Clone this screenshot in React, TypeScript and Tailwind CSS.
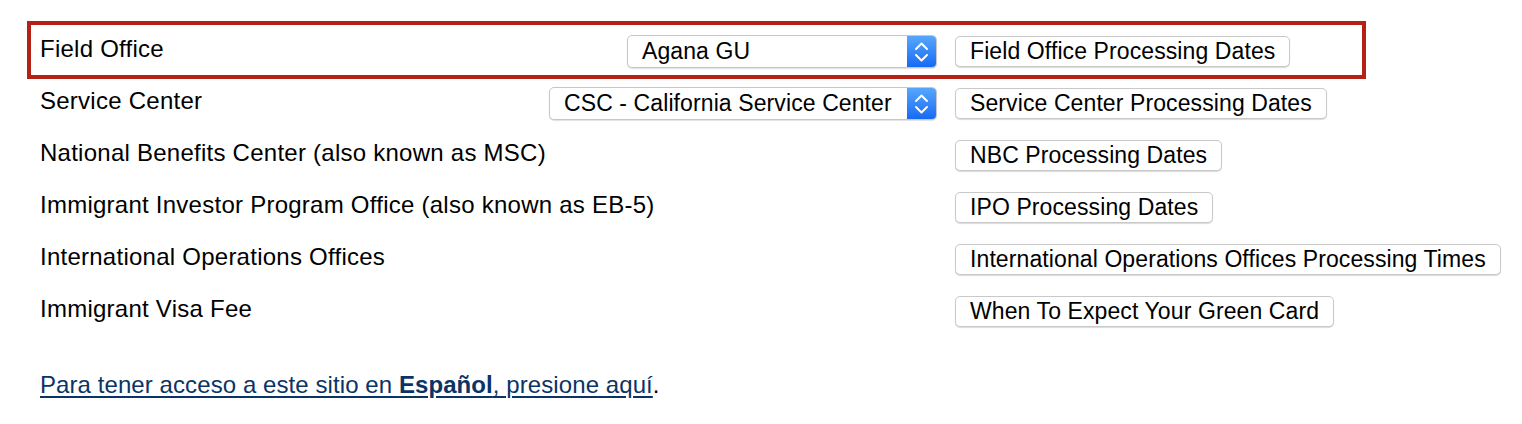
import React from "react";

type Row = {
  label: string;
  button: string;
  select?: { value: string; width: string };
};

const rows: Row[] = [
  {
    label: "Field Office",
    button: "Field Office Processing Dates",
    select: { value: "Agana GU", width: "w-[310px]" },
  },
  {
    label: "Service Center",
    button: "Service Center Processing Dates",
    select: { value: "CSC - California Service Center", width: "w-[388px]" },
  },
  { label: "National Benefits Center (also known as MSC)", button: "NBC Processing Dates" },
  { label: "Immigrant Investor Program Office (also known as EB-5)", button: "IPO Processing Dates" },
  { label: "International Operations Offices", button: "International Operations Offices Processing Times" },
  { label: "Immigrant Visa Fee", button: "When To Expect Your Green Card" },
];

const font = { fontFamily: '"Liberation Sans", Arial, sans-serif' };

const SelectBox: React.FC<{ value: string; width: string }> = ({ value, width }) => {
  return (
    <div
      className={`${width} h-[33px] flex items-center rounded-[5px] border border-[#c6c6c6] bg-white shadow-[0_1px_1px_rgba(0,0,0,0.12)] overflow-hidden`}
    >
      <span className="flex-1 pl-[14px] text-[23px] tracking-[0.1px] leading-none text-black whitespace-nowrap">
        {value}
      </span>
      <div className="w-[29px] h-full bg-gradient-to-b from-[#58a6fb] to-[#1569f4] flex items-center justify-center">
        <svg width="29" height="33" viewBox="0 0 29 33" fill="none">
          <polyline points="9,14 14.5,8.5 20,14" stroke="white" strokeWidth="2" strokeLinecap="round" strokeLinejoin="round" />
          <polyline points="9,20 14.5,25.5 20,20" stroke="white" strokeWidth="2" strokeLinecap="round" strokeLinejoin="round" />
        </svg>
      </div>
    </div>
  );
};

const RowItem: React.FC<{ row: Row; height: string }> = ({ row, height }) => {
  return (
    <div className={`flex items-start pt-[10px] ${height}`}>
      <div className="w-[897px] flex items-start justify-between">
        <span className="mt-[1px] text-[24px] tracking-[0.25px] leading-[26px] text-black whitespace-nowrap">
          {row.label}
        </span>
        {row.select && <SelectBox value={row.select.value} width={row.select.width} />}
      </div>
      <button className="ml-[18px] mt-[1px] h-[31px] px-[14px] flex items-center rounded-[5px] border border-[#c9c9c9] bg-white shadow-[0_1px_1px_rgba(0,0,0,0.15)] text-[23px] tracking-[0.1px] leading-none text-black whitespace-nowrap">
        {row.button}
      </button>
    </div>
  );
};

export default function App() {
  return (
    <div className="w-[1522px] h-[424px] bg-white pt-[21px] pl-[27px]" style={font}>
      <div className="w-[1339px] border-4 border-[#b52116] pl-[9px]">
        <RowItem row={rows[0]} height="h-[50px]" />
      </div>
      <div className="pl-[13px] -mt-[2px]">
        {rows.slice(1).map((row) => (
          <RowItem key={row.label} row={row} height="h-[52px]" />
        ))}
      </div>
      <p className="pl-[13px] mt-[34px] text-[24px] tracking-[0.08px] leading-[28px] text-black">
        <a href="#" className="text-[#0b3466] underline underline-offset-[3px]">
          Para tener acceso a este sitio en <b>Español</b>, presione aquí
        </a>
        .
      </p>
    </div>
  );
}
